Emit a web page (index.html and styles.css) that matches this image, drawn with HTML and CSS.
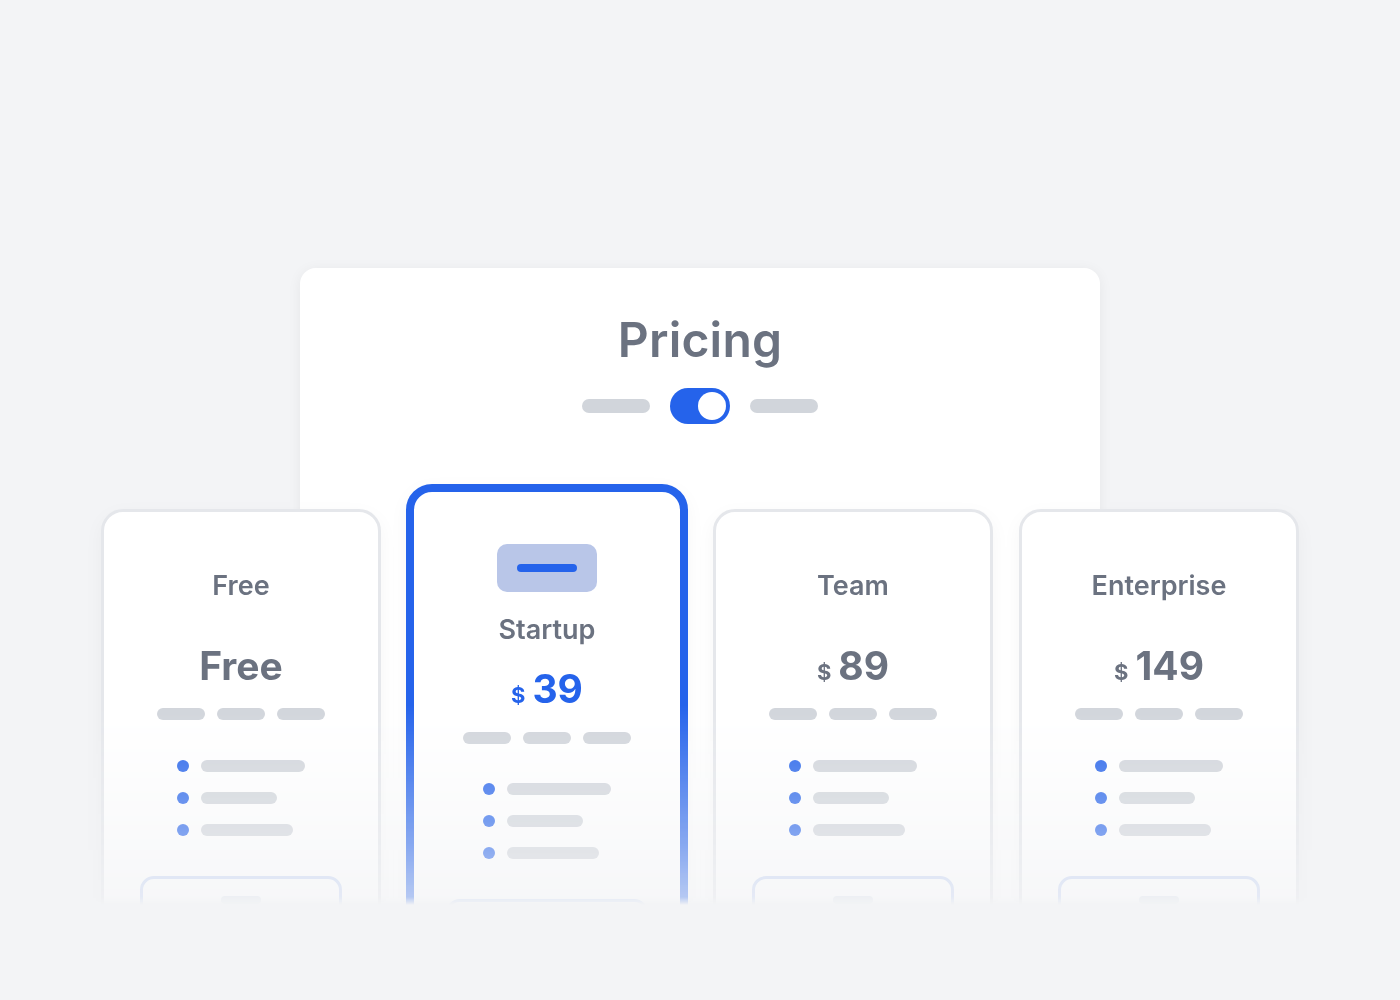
FILE: index.html
```html
<!DOCTYPE html>
<html>
<head>
<title>Pricing</title>
<meta charset="UTF-8">
<link rel="stylesheet" href="styles.css">
</head>

<body>
<div class="stage">
<div class="panel">
    <h1 class="title">Pricing</h1>
    <div class="switch-row">
        <span class="pill"></span>
        <span class="toggle"><span class="knob"></span></span>
        <span class="pill"></span>
    </div>

    <div class="plans">
        <div class="plan">
            <div class="plan-name">Free</div>
            <div class="plan-price">Free</div>
            <div class="dashes"><span></span><span></span><span></span></div>
            <ul class="features"><li><i></i><b></b></li><li><i></i><b></b></li><li><i></i><b></b></li></ul>
            <div class="plan-btn"><span></span></div>
        </div>

        <div class="plan plan-hot">
            <div class="badge"><span></span></div>
            <div class="plan-name">Startup</div>
            <div class="plan-price"><small>$</small>39</div>
            <div class="dashes"><span></span><span></span><span></span></div>
            <ul class="features"><li><i></i><b></b></li><li><i></i><b></b></li><li><i></i><b></b></li></ul>
            <div class="plan-btn"><span></span></div>
        </div>

        <div class="plan">
            <div class="plan-name">Team</div>
            <div class="plan-price"><small>$</small>89</div>
            <div class="dashes"><span></span><span></span><span></span></div>
            <ul class="features"><li><i></i><b></b></li><li><i></i><b></b></li><li><i></i><b></b></li></ul>
            <div class="plan-btn"><span></span></div>
        </div>

        <div class="plan">
            <div class="plan-name">Enterprise</div>
            <div class="plan-price"><small>$</small>149</div>
            <div class="dashes"><span></span><span></span><span></span></div>
            <ul class="features"><li><i></i><b></b></li><li><i></i><b></b></li><li><i></i><b></b></li></ul>
            <div class="plan-btn"><span></span></div>
        </div>
    </div>
</div>
</div>
</body>
</html>
```

FILE: styles.css
```css
html,body{margin:0;padding:0;}
body{background:#f3f4f6;color:#6b7280;font-family:Inter,"Noto Sans",sans-serif;}

/* whole scene fades out towards the bottom */
.stage{height:1000px;overflow:hidden;padding-top:268px;box-sizing:border-box;
    -webkit-mask-image:linear-gradient(to bottom,#000 705px,rgba(0,0,0,.5) 850px,rgba(0,0,0,.3) 897px,transparent 905px);
    mask-image:linear-gradient(to bottom,#000 705px,rgba(0,0,0,.5) 850px,rgba(0,0,0,.3) 897px,transparent 905px);}

.panel{width:800px;margin:0 auto;padding-top:44px;height:760px;box-sizing:border-box;background:#fff;border-radius:16px;box-shadow:0 2px 14px rgba(17,24,39,.06);}
.title{margin:0;text-align:center;font-size:48px;line-height:56px;font-weight:600;color:#6b7280;letter-spacing:.2px;}

.switch-row{display:flex;justify-content:center;align-items:center;gap:20px;margin-top:20px;height:36px;}
.pill{width:68px;height:14px;border-radius:7px;background:#d1d5db;}
.toggle{width:60px;height:36px;border-radius:18px;background:#2563eb;display:flex;align-items:center;justify-content:flex-end;padding:0 4px;box-sizing:border-box;}
.knob{width:28px;height:28px;border-radius:50%;background:#fff;}

.plans{display:flex;justify-content:center;align-items:flex-start;gap:26px;margin:60px -199px 0;}
.plan{width:280px;height:480px;margin-top:25px;box-sizing:border-box;background:#fff;border:3px solid #e5e7eb;border-radius:22px;padding-top:58px;display:flex;flex-direction:column;align-items:center;box-shadow:0 6px 20px rgba(17,24,39,.04);}
.plan-hot{width:282px;height:505px;margin:0 -1px;border:8px solid #2563eb;border-radius:26px;padding-top:52px;}

.badge{width:100px;height:48px;border-radius:10px;background:#b9c6e8;display:flex;align-items:center;justify-content:center;}
.badge span{width:60px;height:8px;border-radius:4px;background:#2563eb;}

.plan-name{font-size:27px;line-height:32px;font-weight:560;color:#6b7280;}
.plan-price{margin-top:42px;height:44px;font-size:39px;line-height:44px;font-weight:700;color:#6b7280;display:flex;align-items:baseline;}
.plan-price small{font-size:22px;line-height:1;font-weight:700;margin-right:7px;}

.dashes{display:flex;gap:12px;margin-top:20px;}
.dashes span{width:48px;height:12px;border-radius:6px;background:#d1d5db;}

.features{list-style:none;margin:40px 0 0;padding:0;width:128px;display:flex;flex-direction:column;gap:20px;}
.features li{display:flex;align-items:center;gap:12px;height:12px;}
.features i{width:12px;height:12px;border-radius:50%;background:#2563eb;}
.features b{height:12px;border-radius:6px;background:#d1d5db;width:104px;}
.features li:nth-child(2) b{width:76px;}
.features li:nth-child(3) b{width:92px;}

.plan-btn{margin-top:40px;width:202px;height:48px;box-sizing:border-box;border:3px solid #c5d3f4;border-radius:14px;display:flex;justify-content:center;align-items:center;}
.plan-btn span{width:40px;height:8px;border-radius:4px;background:#e1e5ee;}

.plan-hot .plan-name{margin-top:22px;}
.plan-hot .plan-price{margin-top:21px;color:#2563eb;}
.plan-hot .dashes{margin-top:21px;}
.plan-hot .features{margin-top:39px;}
```
